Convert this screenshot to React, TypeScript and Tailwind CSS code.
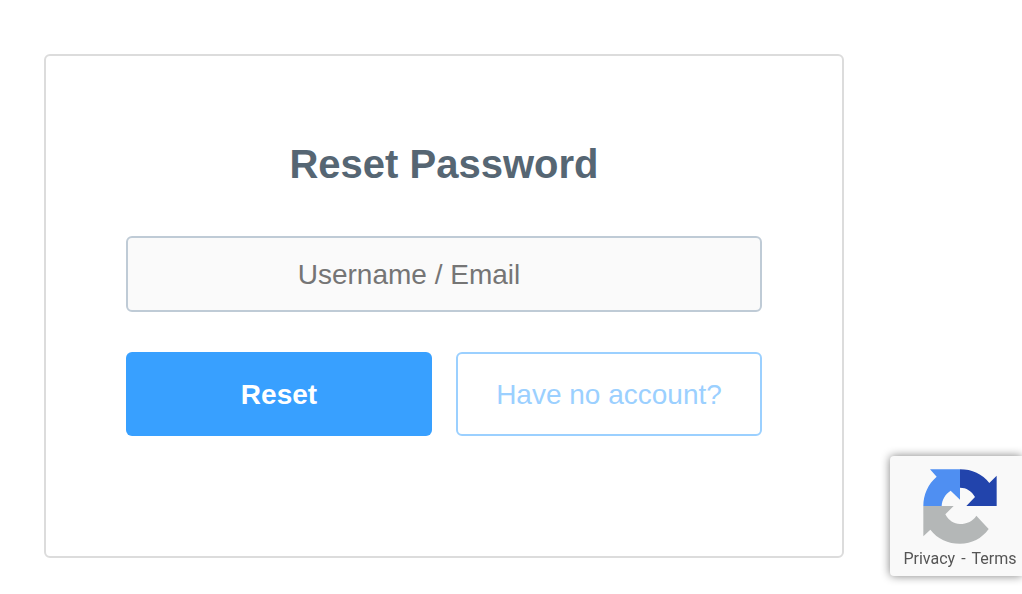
import { useState } from 'react';

const RecaptchaLogo = () => (
  <svg viewBox="18 24 234 234" className="h-[78px] w-[78px]" aria-hidden="true">
    <path
      fill="#4f8ff2"
      d="M45 28H135V119L107 92C90 103 81 119 80 138H25C25 104 39 72 65 50Z"
    />
    <path
      fill="#2244ac"
      d="M135 28C171 28 202 42 223 69L245 47V138H154L180 111C170 93 154 83 135 83Z"
    />
    <path
      fill="#b4b7b7"
      d="M25 138H116L91 163C101 182 117 192 135 192C156 192 174 183 184 167L221 207C200 236 170 251 135 251C99 251 68 237 46 209L25 229Z"
    />
  </svg>
);

const RecaptchaBadge = () => (
  <div className="fixed right-0 bottom-[18px] flex h-[120px] w-[132px] flex-col items-center rounded-l-sm bg-[#f9f9f9] pt-3 pl-2 shadow-[0_0_10px_#808080]">
    <RecaptchaLogo />
    <p className="flex gap-1.5 font-[Roboto,sans-serif] text-base leading-[26px] whitespace-nowrap text-[#555555]">
      <a href="#privacy">Privacy</a>
      <span>-</span>
      <a href="#terms">Terms</a>
    </p>
  </div>
);

const App = () => {
  const [login, setLogin] = useState('');

  const handleSubmit = (e: React.FormEvent<HTMLFormElement>) => {
    e.preventDefault();
  };

  return (
    <div className="min-h-screen bg-white px-11 py-[54px] font-['Liberation_Sans',Arial,sans-serif]">
      <form
        onSubmit={handleSubmit}
        className="w-full max-w-[800px] rounded-md border-2 border-[#dcdcdc] px-20 pt-20 pb-[120px]"
      >
        <h1 className="mb-11 text-center text-[40px] leading-14 font-bold text-[#566673]">
          Reset Password
        </h1>

        <input
          type="text"
          aria-label="Username / Email"
          placeholder="Username / Email"
          value={login}
          onChange={(e) => setLogin(e.target.value)}
          className="mb-10 block h-[76px] w-full rounded-md border-2 border-[#bfcbd6] bg-[#fafafa] pt-0.5 pr-[90px] pl-5 text-center text-[28px] text-[#566673] placeholder:text-[#757575] focus:outline-none"
        />

        <div className="grid grid-cols-2 gap-6">
          <button
            type="submit"
            className="h-[84px] rounded-md bg-[#38a0ff] pt-0.5 text-[28px] font-bold text-white"
          >
            Reset
          </button>
          <button
            type="button"
            className="h-[84px] rounded-md border-2 border-[#9bd0ff] bg-white pt-0.5 text-[28px] text-[#9bd0ff]"
          >
            Have no account?
          </button>
        </div>
      </form>

      <RecaptchaBadge />
    </div>
  );
};

export default App;
